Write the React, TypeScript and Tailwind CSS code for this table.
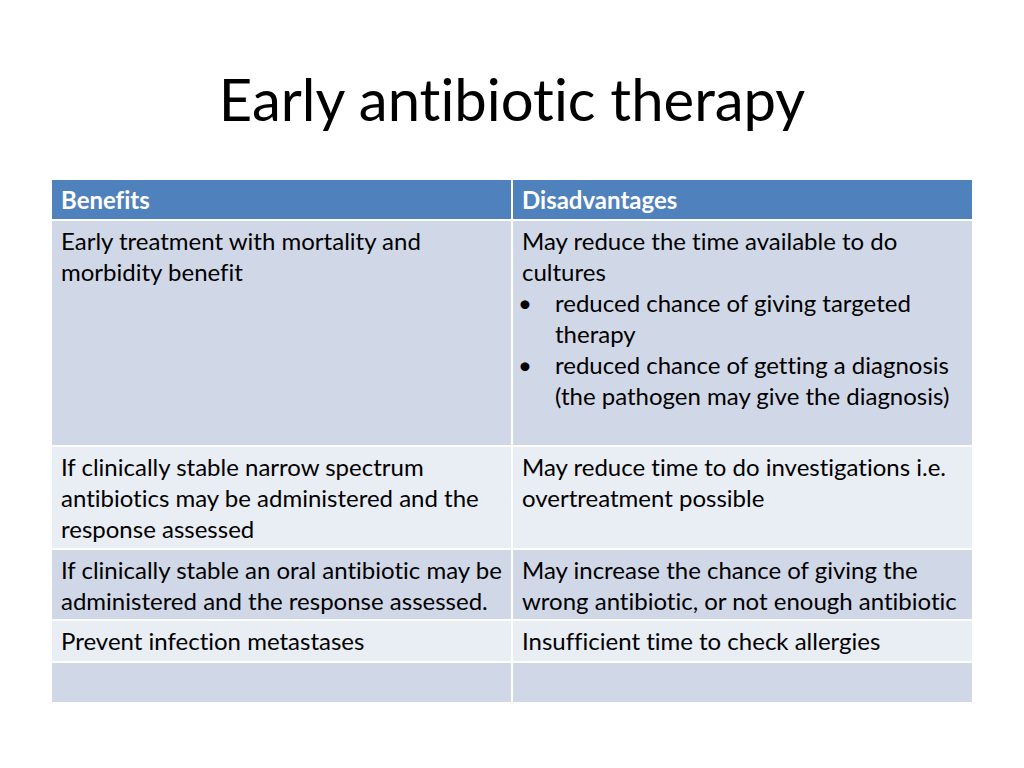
import React from "react";

const font = { fontFamily: "Lato, 'Open Sans', sans-serif" };

function Lines({ lines }: { lines: string[] }) {
  return (
    <>
      {lines.map((l, i) => (
        <div key={i} className="whitespace-nowrap">{l}</div>
      ))}
    </>
  );
}

function Bullet({ lines }: { lines: string[] }) {
  return (
    <div className="flex">
      <span className="w-[33px] shrink-0 -translate-x-[4px]">•</span>
      <div><Lines lines={lines} /></div>
    </div>
  );
}

const cell = "pl-[9px] pr-[10px] pt-[4px]";

export default function App() {
  return (
    <div className="w-[1024px] h-[768px] bg-white relative overflow-hidden text-black [font-variant-ligatures:none]" style={font}>
      <div className="h-[180px] flex justify-center pt-[64px]">
        <h1 className="text-[58px] leading-[70px] font-normal">Early antibiotic therapy</h1>
      </div>
      <div className="ml-[52px] w-[920px] grid grid-cols-2 gap-[2px] text-[24px] leading-[31px]">
        <div className="h-[39px] bg-[#4f81bd] text-white font-bold pl-[9px] pr-[10px] pt-[4px]">Benefits</div>
        <div className="h-[39px] bg-[#4f81bd] text-white font-bold pl-[9px] pr-[10px] pt-[4px]">Disadvantages</div>

        <div className={`h-[224px] bg-[#d0d8e8] ${cell}`}>
          <Lines lines={["Early treatment with mortality and", "morbidity benefit"]} />
        </div>
        <div className={`h-[224px] bg-[#d0d8e8] ${cell}`}>
          <Lines lines={["May reduce the time available to do", "cultures"]} />
          <Bullet lines={["reduced chance of giving targeted", "therapy"]} />
          <Bullet lines={["reduced chance of getting a diagnosis", "(the pathogen may give the diagnosis)"]} />
        </div>

        <div className={`h-[101px] bg-[#e9edf4] ${cell}`}>
          <Lines lines={["If clinically stable narrow spectrum", "antibiotics may be administered and the", "response assessed"]} />
        </div>
        <div className={`h-[101px] bg-[#e9edf4] ${cell}`}>
          <Lines lines={["May reduce time to do investigations i.e.", "overtreatment possible"]} />
        </div>

        <div className={`h-[69px] bg-[#d0d8e8] ${cell}`}>
          <Lines lines={["If clinically stable an oral antibiotic may be", "administered and the response assessed."]} />
        </div>
        <div className={`h-[69px] bg-[#d0d8e8] ${cell}`}>
          <Lines lines={["May increase the chance of giving the", "wrong antibiotic, or not enough antibiotic"]} />
        </div>

        <div className={`h-[40px] bg-[#e9edf4] ${cell}`}>Prevent infection metastases</div>
        <div className={`h-[40px] bg-[#e9edf4] ${cell}`}>Insufficient time to check allergies</div>

        <div className="h-[39px] bg-[#d0d8e8]"></div>
        <div className="h-[39px] bg-[#d0d8e8]"></div>
      </div>
    </div>
  );
}
